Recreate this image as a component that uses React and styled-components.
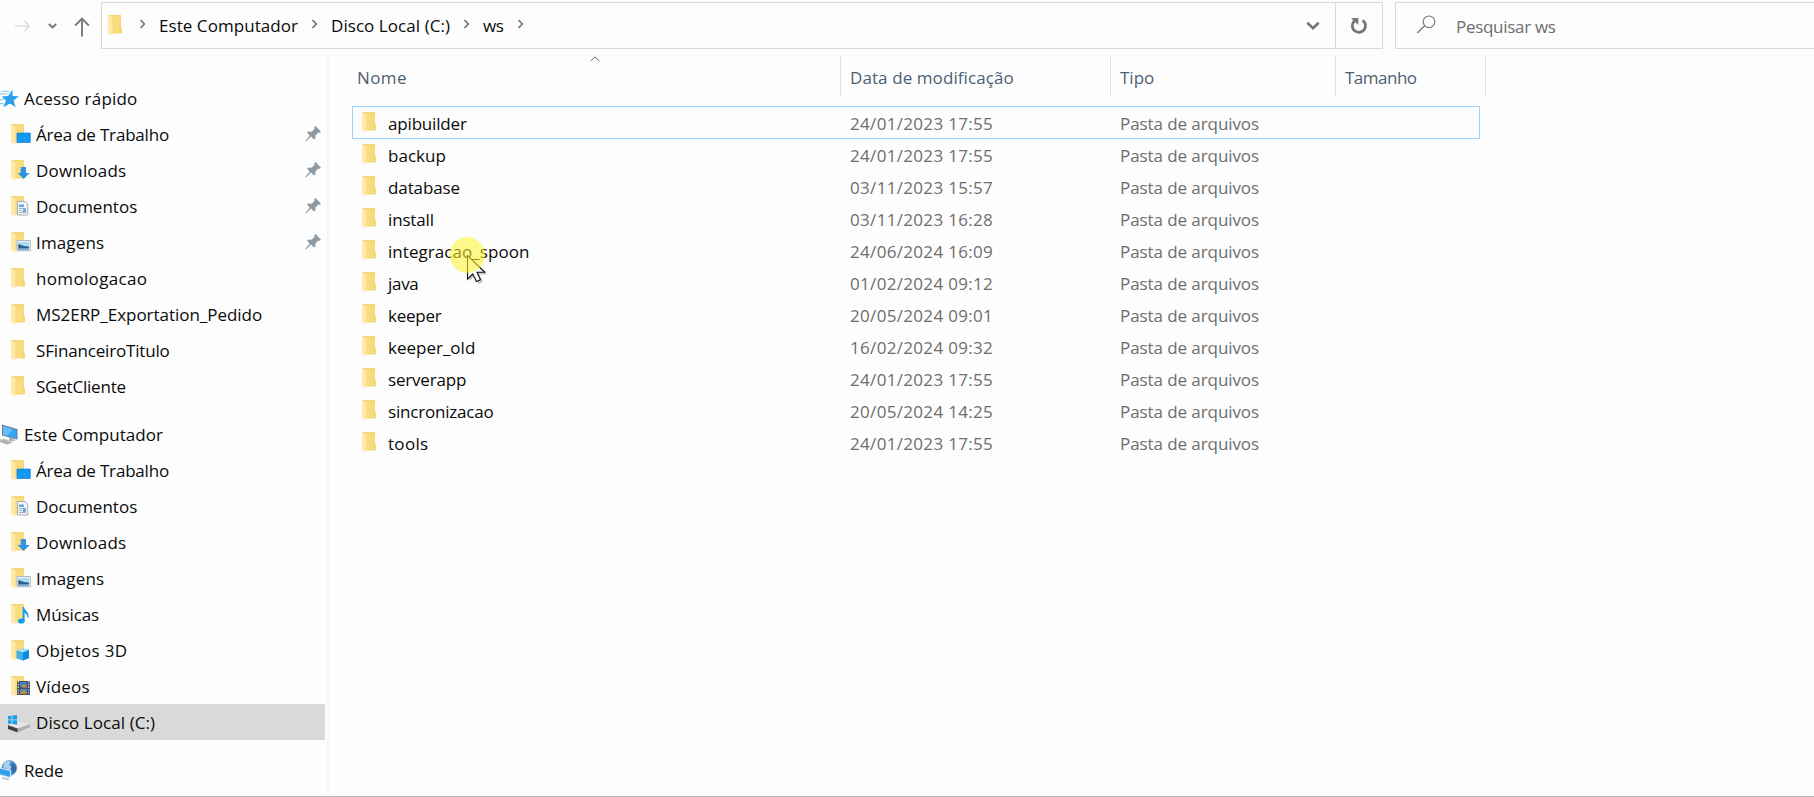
import React from 'react';
import styled, { createGlobalStyle, css } from 'styled-components';

const Global = createGlobalStyle`
  * { box-sizing: border-box; }
  body { margin: 0; background: #fdfdfd; overflow: hidden; }
`;

const Window = styled.div`
  position: relative;
  display: flex;
  flex-direction: column;
  width: 100vw;
  height: 100vh;
  overflow: hidden;
  background: #fdfdfd;
  border-bottom: 1px solid #bdbdbd;
  color: #0a0a0a;
  font: 17px/24px 'Open Sans', 'Noto Sans', sans-serif;
  white-space: nowrap;
`;

const Label = styled.span`
  letter-spacing: ${(p) => p.$track || 0}px;
`;

const TopBar = styled.header`
  display: flex;
  height: 49px;
  padding-top: 2px;
  flex: none;
`;

const NavButtons = styled.div`
  width: 101px;
  flex: none;
  display: flex;
  align-items: center;
  padding: 1px 0 0 14px;
`;

const AddressBar = styled.div`
  display: flex;
  width: 1282px;
  flex: none;
  height: 47px;
  border: 1px solid #d9d9d9;
`;

const Crumbs = styled.div`
  display: flex;
  flex: 1;
  padding: 11px 0 0 6px;
`;

const CrumbFolder = styled.svg`
  width: 31px;
  height: 24px;
  flex: none;
`;

const Crumb = styled.div`
  width: ${(p) => p.$w}px;
  height: 24px;
  padding-left: 1px;
  flex: none;
`;

const CrumbArrow = styled.svg`
  width: ${(p) => p.$w}px;
  height: 24px;
  flex: none;
`;

const BarButton = styled.div`
  width: ${(p) => p.$w}px;
  display: flex;
  align-items: center;
  justify-content: center;
  ${(p) => p.$divided && css`border-left: 1px solid #d9d9d9;`}
`;

const SearchBox = styled.div`
  display: flex;
  flex: 1;
  height: 47px;
  margin-left: 12px;
  padding: 12px 0 0 20px;
  border: 1px solid #d9d9d9;
  border-right: 0;
  color: #6d6d6d;
`;

const SearchIcon = styled.svg`
  width: 20px;
  height: 20px;
  margin-right: 20px;
  flex: none;
`;

const Body = styled.main`
  display: flex;
  flex: 1;
  min-height: 0;
`;

const Sidebar = styled.nav`
  width: 329px;
  flex: none;
  margin-top: 7px;
  padding: 24px 2px 0 0;
  border-right: 2px solid #f5f5f5;
`;

const NavGroup = styled.section`
  margin-bottom: 12px;
`;

const NavItem = styled.div`
  display: flex;
  height: 36px;
  width: 325px;
  padding: 7px 2px 0 ${(p) => (p.$root ? 0 : 8)}px;
  background: ${(p) => (p.$selected ? '#d9d9d9' : 'transparent')};
`;

const NavIcon = styled.svg`
  width: ${(p) => (p.$root ? 24 : 28)}px;
  height: 24px;
  flex: none;
`;

const Spacer = styled.div`
  flex: 1;
`;

const Pin = styled.svg`
  width: 18px;
  height: 20px;
  margin-top: 2px;
  flex: none;
`;

const FileList = styled.section`
  flex: 1;
  min-width: 0;
`;

const Columns = styled.div`
  display: flex;
  margin: 7px 0 9px;
  height: 41px;
  color: #4c5f73;
`;

const Column = styled.div`
  position: relative;
  width: ${(p) => p.$w}px;
  padding: 10px 0 0 ${(p) => p.$pad}px;
  border-right: 1px solid #e2e2e2;
`;

const SortMark = styled.svg`
  position: absolute;
  left: 261px;
  top: 0;
  width: 10px;
  height: 6px;
`;

const FileRow = styled.div`
  display: flex;
  width: 1128px;
  height: 33px;
  margin: 0 0 -1px 23px;
  padding-top: 5px;
  border: 1px solid ${(p) => (p.$focused ? '#99d1ff' : 'transparent')};
`;

const FileIcon = styled.svg`
  width: 26px;
  height: 24px;
  margin-left: 9px;
  flex: none;
`;

const FileName = styled.div`
  width: 462px;
  flex: none;
`;

const Meta = styled.div`
  width: ${(p) => p.$w}px;
  flex: none;
  color: #6d6d6d;
`;

const Pointer = styled.svg`
  position: absolute;
  left: 447px;
  top: 235px;
  width: 44px;
  height: 52px;
`;

const Folder = () => (
  <g>
    <path d="M0 0H13V12L14 13V18.5H4L0 17Z" fill="#f6d671" />
    <path d="M5 1.5H12.5V11L11 12.5V18H5Z" fill="#f9dc80" />
    <path d="M0 0L4.6 2.6V20.6L0 18Z" fill="#fee9a6" />
  </g>
);

const overlays = {
  plain: null,
  desktop: <path d="M6 9H19.3V18.5H6Z" fill="#129af0" stroke="#0f80d2" strokeWidth=".7" />,
  download: <path d="M9.7 7H15V13H18.7L12.6 19L6.6 13H9.7Z" fill="#2f93e6" />,
  document: (
    <g>
      <path d="M6.5 5.5H14L16.7 8V19H6.5Z" fill="#f3f6f9" stroke="#a5adb5" />
      <path d="M8 8.5H13V11H8ZM12 13H15V16H12Z" fill="#69a8df" />
      <path d="M8 12.5H15M8 14.5H11M8 16.5H15" stroke="#8c9cac" strokeWidth=".8" />
    </g>
  ),
  image: (
    <g>
      <path d="M6 8.5H19.4V18.8H6Z" fill="#eef2f5" stroke="#adb8c1" />
      <path d="M7.3 10H18V17.4H7.3Z" fill="#acd8f6" />
      <path d="M7.3 12C11 13 13 15 18 14.5V17.4H7.3Z" fill="#2b5f90" />
      <path d="M7.3 16H18V17.4H7.3Z" fill="#6aa5d2" />
    </g>
  ),
  music: (
    <g fill="#169bef">
      <ellipse cx="10.3" cy="17" rx="3.3" ry="2.6" />
      <path d="M11.6 3H13.2C13.2 7 18.2 7 17.7 13.5H16.4C16.7 10.5 15.4 9.7 13.5 9V17H11.6Z" />
    </g>
  ),
  cube: (
    <g>
      <path d="M5.5 10.5L12 8.5L18 10V18L12 20.5L5.5 18.5Z" fill="#43aeea" />
      <path d="M5.5 10.5L12 8.5L18 10L12 12.5Z" fill="#a7e0fb" />
      <path d="M12 12.5L18 10V18L12 20.5Z" fill="#1288d8" />
    </g>
  ),
  video: (
    <g>
      <path d="M6 5H19V19H6Z" fill="#4b4d52" />
      <path d="M7.3 5V19M17.7 5V19" stroke="#d5d8db" strokeWidth="1.2" strokeDasharray="1.4 1.4" />
      <path d="M9 6H16V11.5H9Z" fill="#3383cf" />
      <path d="M9 13H16V18H9Z" fill="#3b8dd8" />
      <path d="M10 10L13 8L16 10.5V11.5H12ZM9 17L13 14L15 16V18H9Z" fill="#c78b2d" />
    </g>
  ),
};

const rootIcons = {
  star: (
    <g>
      <path d="M12.4 2.6L12.6 9L18.8 9.3L13.6 13.4L15.6 20L9.9 16.4L3.2 20.2L6 13.4L1.6 9.4L8.2 9Z" fill="#2ba0ee" />
      <path d="M1.5 4.2H9.5M0 7H7.5M0 12.8H4M0 16.6H3.5" stroke="#7cc9f6" strokeWidth="1.1" />
    </g>
  ),
  computer: (
    <g transform="translate(0 .8)">
      <path d="M2 .7L17.5 5.5V15.8L2 11.8Z" fill="#5f7c93" />
      <path d="M3 2.3L16.6 6.5V14.5L3 10.9Z" fill="#36a6f5" />
      <path d="M3 2.3L13 5.5L7 12L3 10.9Z" fill="#68bdf8" />
      <path d="M9 13.5L14 14.8L15 17L9 18Z" fill="#aab1b6" />
      <path d="M0 15.5L5 15L13 19L7 21L0 18.5Z" fill="#c7cbce" />
      <path d="M0 17L8 20M3 16L10 19" stroke="#8e9499" strokeWidth=".8" />
    </g>
  ),
  network: (
    <g>
      <circle cx="9.3" cy="9" r="7.7" fill="#4b8fca" />
      <path d="M4 3.5Q8 1 11 2.5L9 6L12 8L9 11L3 8Z" fill="#a7d0ec" />
      <path d="M12 4L16 7V12L13 14L11 10Z" fill="#2f6eab" />
      <path d="M0 8.5L11 11V19.5L0 16.5Z" fill="#dce8f0" />
      <path d="M0 9.5L10 12V18L0 15.3Z" fill="#2fa2f1" />
      <path d="M2 18L9 19.5V21.5L2 20Z" fill="#c3c8cc" />
    </g>
  ),
};

const driveIcon = (
  <g>
    <path d="M0 14L10 17V21.5L0 18Z" fill="#3d4349" />
    <path d="M0 14L10 10.5L22 13L9.5 17.5Z" fill="#e6e6e6" />
    <path d="M9.5 17.5L22 13.3V16L9.5 21.5Z" fill="#acaeb0" />
    <path d="M0 5.3L3.6 4.7V8.4H0ZM4.4 4.6L9 4V8.4H4.4ZM0 9.2H3.6V13L0 12.4ZM4.4 9.2H9V13.7L4.4 13.1Z" fill="#1aa2ee" />
  </g>
);

const navGroups = [
  [
    ['star', 'Acesso rápido', 0.19],
    ['desktop', 'Área de Trabalho', -0.19, 'pin'],
    ['download', 'Downloads', 0.18, 'pin'],
    ['document', 'Documentos', 0, 'pin'],
    ['image', 'Imagens', 0.14, 'pin'],
    ['plain', 'homologacao', 0.34],
    ['plain', 'MS2ERP_Exportation_Pedido', -0.03],
    ['plain', 'SFinanceiroTitulo', -0.17],
    ['plain', 'SGetCliente', -0.21],
  ],
  [
    ['computer', 'Este Computador', 0.06],
    ['desktop', 'Área de Trabalho', -0.19],
    ['document', 'Documentos', 0],
    ['download', 'Downloads', 0.18],
    ['image', 'Imagens', 0.14],
    ['music', 'Músicas', -0.12],
    ['cube', 'Objetos 3D', 0.3],
    ['video', 'Vídeos', 0.18],
    ['drive', 'Disco Local (C:)', 0.06],
  ],
  [['network', 'Rede', -0.15]],
];

const files = [
  ['apibuilder', '24/01/2023 17:55', -0.17],
  ['backup', '24/01/2023 17:55', 0.03],
  ['database', '03/11/2023 15:57', -0.11],
  ['install', '03/11/2023 16:28', -0.15],
  ['integracao_spoon', '24/06/2024 16:09', 0.06],
  ['java', '01/02/2024 09:12', -0.3],
  ['keeper', '20/05/2024 09:01', -0.22],
  ['keeper_old', '16/02/2024 09:32', 0],
  ['serverapp', '24/01/2023 17:55', -0.18],
  ['sincronizacao', '20/05/2024 14:25', -0.2],
  ['tools', '24/01/2023 17:55', 0.3],
];

const Arrow = ({ w }) => (
  <CrumbArrow $w={w}>
    <path d="M1.5 6L5.3 10L1.5 14" fill="none" stroke="#7b7b7b" strokeWidth="1.8" />
  </CrumbArrow>
);

function NavEntry({ icon, label, track, pinned }) {
  const root = icon in rootIcons;
  return (
    <NavItem $root={root} $selected={icon === 'drive'}>
      <NavIcon $root={root}>
        {root ? rootIcons[icon] : icon === 'drive' ? driveIcon : (
          <g transform="translate(3 1)"><Folder />{overlays[icon]}</g>
        )}
      </NavIcon>
      <Label $track={track}>{label}</Label>
      <Spacer />
      {pinned && (
        <Pin>
          <path d="M10.6 1L16 6.8L14.6 7.8L13 7.7L10.5 10.6L10.3 13.6L9 14.6L5.9 11.6L1 16.5L.3 16L4.7 10.4L2 7.6L3.4 6.6L6.5 6.8L9.4 4L9.3 2.2Z" fill="#8e9aa3" />
        </Pin>
      )}
    </NavItem>
  );
}

export default function App() {
  return (
    <Window>
      <Global />
      <TopBar>
        <NavButtons>
          <svg width="84" height="24">
            <path d="M1 12H15M10.5 7L15.3 12L10.5 17" fill="none" stroke="#dcdcdc" strokeWidth="1.5" />
            <path d="M34.8 10L38.5 13.4L42.2 10" fill="none" stroke="#777" strokeWidth="1.9" />
            <path d="M68 22.5V5M61.2 11.5L68 4.7L74.8 11.5" fill="none" stroke="#777b7e" strokeWidth="1.9" />
          </svg>
        </NavButtons>
        <AddressBar>
          <Crumbs>
            <CrumbFolder><g transform="translate(0 1)"><Folder /></g></CrumbFolder>
            <Arrow w={19} />
            <Crumb $w={153}><Label $track={0.06}>Este Computador</Label></Crumb>
            <Arrow w={19} />
            <Crumb $w={133}><Label $track={0.06}>Disco Local (C:)</Label></Crumb>
            <Arrow w={19} />
            <Crumb $w={35}><Label $track={-0.3}>ws</Label></Crumb>
            <Arrow w={19} />
          </Crumbs>
          <BarButton $w={44}>
            <svg width="14" height="10"><path d="M1.3 1.8L7 7.3L12.7 1.8" fill="none" stroke="#777" strokeWidth="2.6" /></svg>
          </BarButton>
          <BarButton $w={47} $divided>
            <svg width="18" height="18"><path d="M4.4 3.9A6.6 6.6 0 1 0 12.6 3.3" fill="none" stroke="#777" strokeWidth="2.8" /><path d="M1 1H8.3V8Z" fill="#777" /></svg>
          </BarButton>
        </AddressBar>
        <SearchBox>
          <SearchIcon>
            <circle cx="13" cy="6.8" r="5.8" fill="none" stroke="#777b80" strokeWidth="1.2" />
            <path d="M8.7 10.8L1.2 18" stroke="#777b80" strokeWidth="1.4" />
          </SearchIcon>
          <Label $track={-0.3}>Pesquisar ws</Label>
        </SearchBox>
      </TopBar>
      <Body>
        <Sidebar>
          {navGroups.map((group, i) => (
            <NavGroup key={i}>
              {group.map(([icon, label, track, pin]) => (
                <NavEntry key={label} icon={icon} label={label} track={track} pinned={!!pin} />
              ))}
            </NavGroup>
          ))}
        </Sidebar>
        <FileList>
          <Columns>
            <Column $w={512} $pad={28}>
              <Label $track={0.4}>Nome</Label>
              <SortMark><path d="M.7 5L5 .9L9.3 5" fill="none" stroke="#666" /></SortMark>
            </Column>
            <Column $w={270} $pad={9}><Label $track={0.09}>Data de modificação</Label></Column>
            <Column $w={225} $pad={9}><Label>Tipo</Label></Column>
            <Column $w={150} $pad={9}><Label $track={-0.5}>Tamanho</Label></Column>
          </Columns>
          {files.map(([name, date, track], i) => (
            <FileRow key={name} $focused={i === 0}>
              <FileIcon><Folder /></FileIcon>
              <FileName><Label $track={track}>{name}</Label></FileName>
              <Meta $w={270}><Label $track={0.32}>{date}</Label></Meta>
              <Meta $w={224}><Label $track={-0.08}>Pasta de arquivos</Label></Meta>
            </FileRow>
          ))}
        </FileList>
      </Body>
      <Pointer>
        <path d="M22 22V46L27.5 41.5L31.5 49L36 47L32.5 39.5H40Z" fill="#000" opacity=".22" />
        <path d="M20.5 20.5V44L25.8 39L29.5 46.5L33.5 44.8L30 37.3H37.8Z" fill="#fdfdfd" stroke="#111" strokeWidth="1.1" />
        <circle cx="20.3" cy="20" r="17.8" fill="#fff52d" fillOpacity=".56" />
      </Pointer>
    </Window>
  );
}
